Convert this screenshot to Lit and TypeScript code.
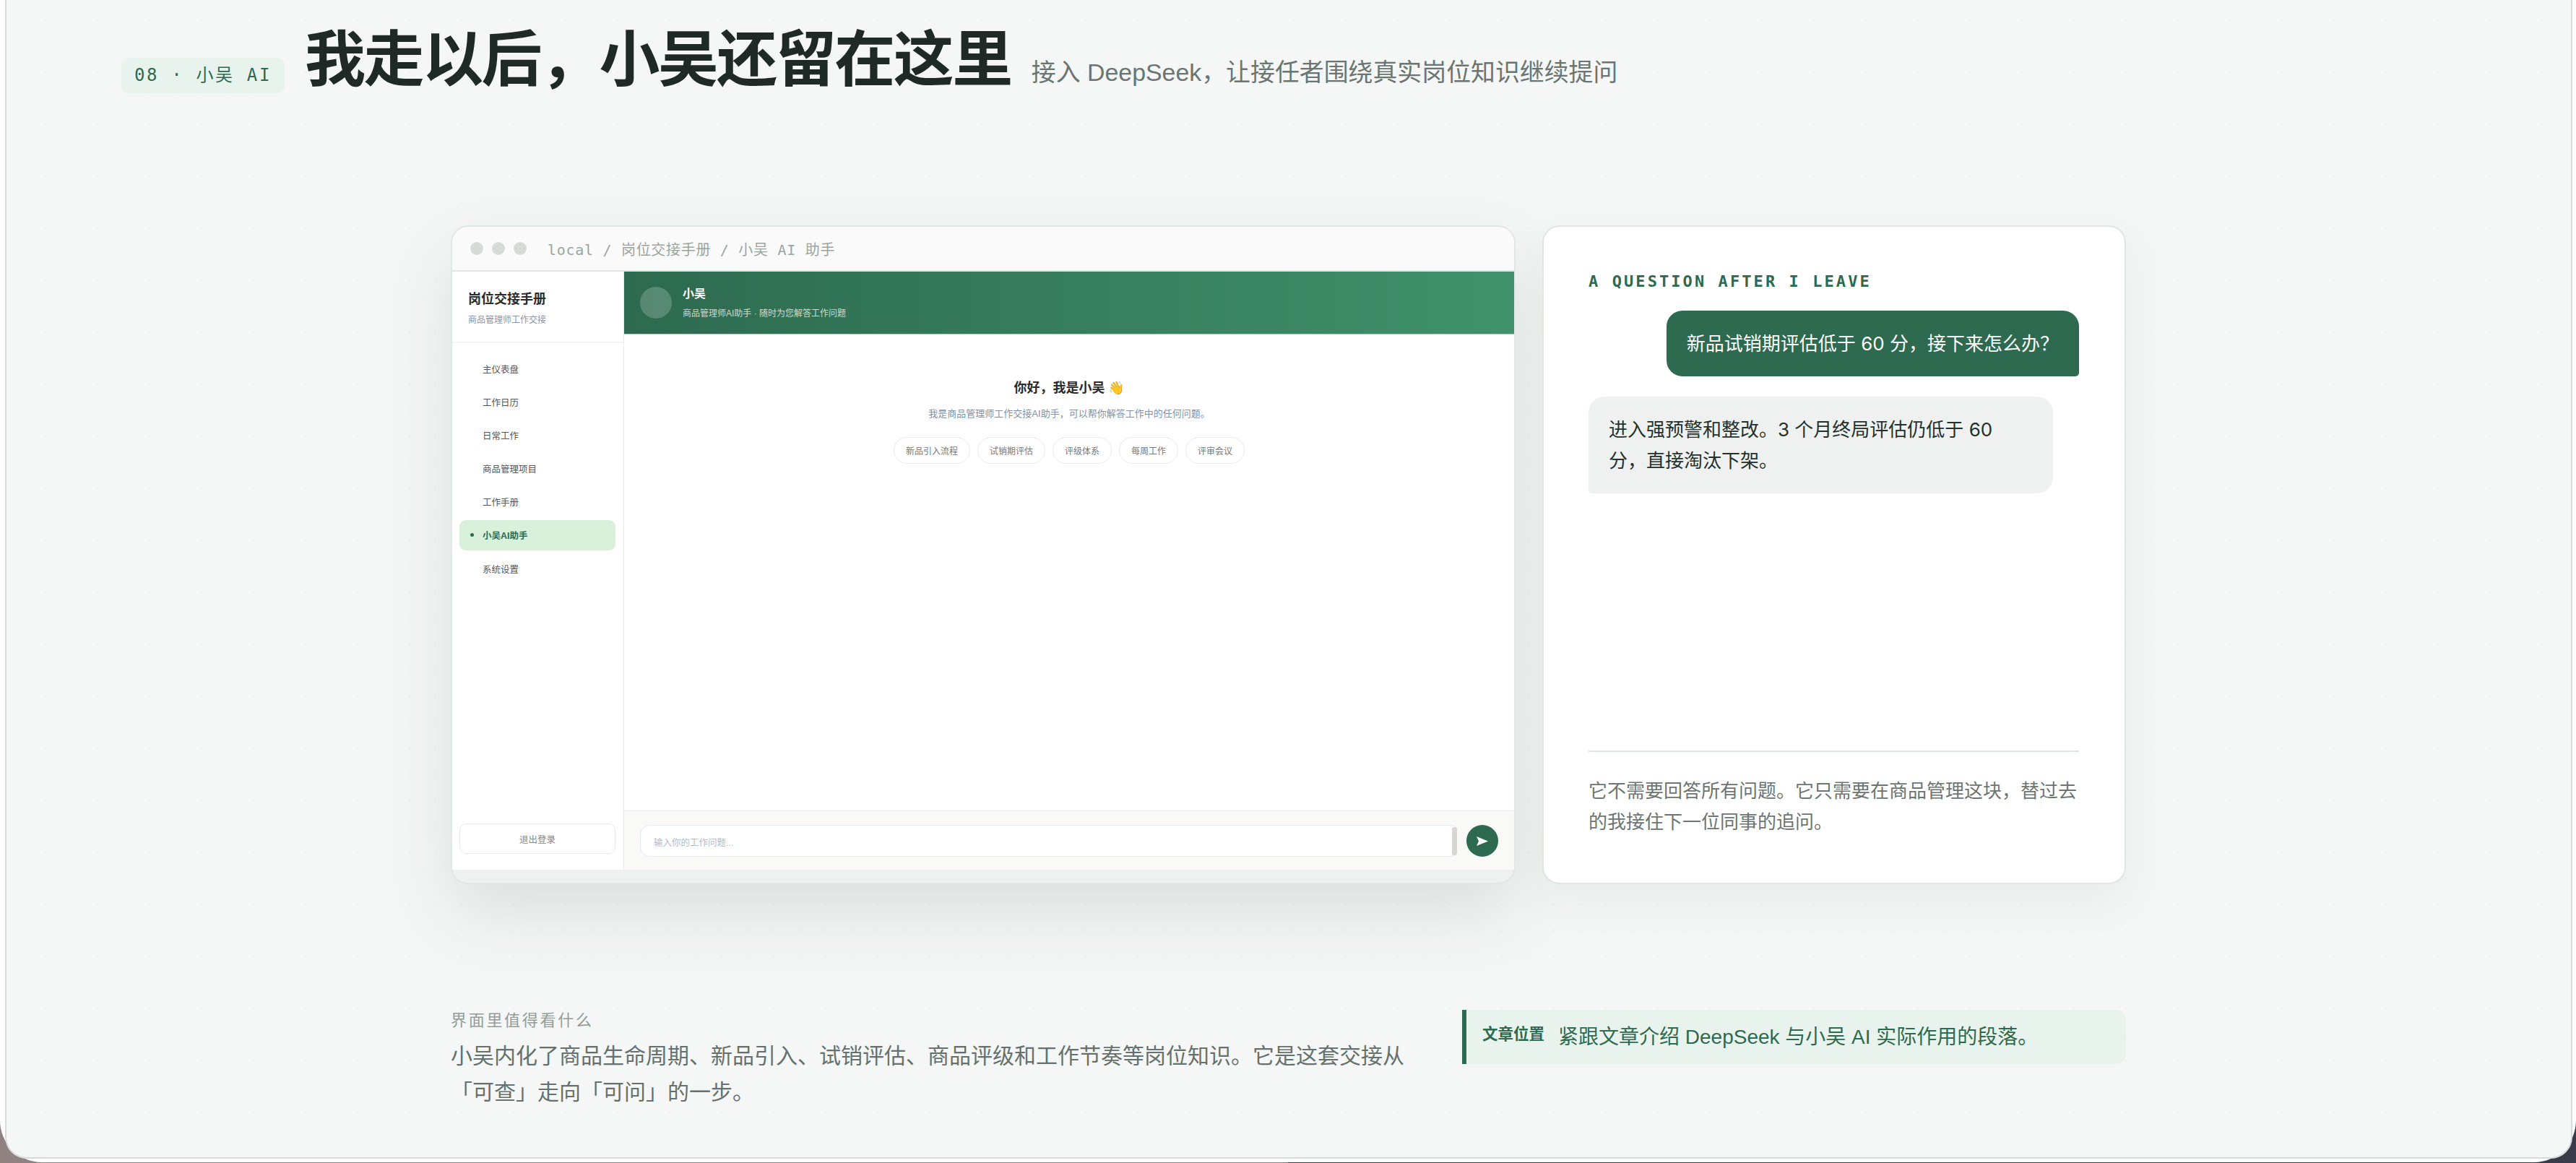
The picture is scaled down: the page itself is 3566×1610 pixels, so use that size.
import { LitElement, html, css } from "lit";
import { customElement } from "lit/decorators.js";

const NAV = ["主仪表盘", "工作日历", "日常工作", "商品管理项目", "工作手册", "小吴AI助手", "系统设置"];
const CHIPS = ["新品引入流程", "试销期评估", "评级体系", "每周工作", "评审会议"];

@customElement("app-root")
export class AppRoot extends LitElement {
  static styles = css`
    :host {
      display: block;
      width: 3566px;
      height: 1610px;
      overflow: hidden;
      background: linear-gradient(90deg, #8f8280 50%, #3a3a4a 50%);
      font-family: "Liberation Sans", "Noto Sans CJK SC", sans-serif;
      color: #1f2a26;
    }
    * { box-sizing: border-box; }
    .shell {
      height: 1609px;
      padding: 0 5px 5px 7px;
      background: #fff;
      border-radius: 0 0 58px 58px;
    }
    .frame {
      height: 100%;
      border: 2px solid #d9dbda;
      border-top: 0;
      border-radius: 0 0 30px 30px;
      background-color: #f4f7f6;
      background-image: radial-gradient(circle, rgba(45, 106, 79, 0.05) 1px, transparent 1.6px);
      background-size: 36px 36px;
      background-position: 0 10px;
    }
    .head {
      height: 312px;
      padding: 37px 0 0 159px;
      display: flex;
      align-items: baseline;
      gap: 28px;
    }
    .badge {
      font-family: "DejaVu Sans Mono", "Noto Sans CJK SC", monospace;
      font-size: 24px;
      line-height: 30px;
      letter-spacing: 2.64px;
      color: #2d6a4f;
      background: #e9f3ee;
      border-radius: 10px;
      padding: 9px 18px 10px 18px;
      white-space: pre;
    }
    h1 {
      margin: 0;
      font-size: 84px;
      line-height: 92px;
      font-weight: 700;
      letter-spacing: -2.52px;
      color: #1f2a26;
    }
    .lede { font-size: 33.9px; line-height: 44px; color: #6b7571; }

    .stage {
      width: 2319px;
      margin-left: 615px;
      display: flex;
      gap: 37px;
      height: 912px;
    }
    .window {
      width: 1474px;
      border: 2px solid #e1e7e5;
      border-radius: 24px;
      background: #edf1f0;
      box-shadow: 0 40px 96px rgba(20, 50, 40, 0.11);
      padding-bottom: 18px;
      display: flex;
      flex-direction: column;
      overflow: hidden;
    }
    .bar {
      height: 62px;
      flex: none;
      background: #fafafa;
      border-bottom: 2px solid #e3e8e6;
      display: flex;
      align-items: center;
      padding: 0 0 0 25px;
      gap: 12px;
    }
    .light { width: 18px; height: 18px; border-radius: 50%; background: #d5dcd8; }
    .crumb {
      margin-left: 17px;
      font-family: "DejaVu Sans Mono", "Noto Sans CJK SC", monospace;
      font-size: 20px;
      letter-spacing: 0.7px;
      color: #9aa5a0;
      white-space: pre;
    }
    .app { flex: 1; display: flex; background: #fff; min-height: 0; }
    .side {
      width: 238px;
      flex: none;
      border-right: 1px solid #e8ebf3;
      display: flex;
      flex-direction: column;
    }
    .side-head { padding: 25px 22px 21px; border-bottom: 2px solid #f2f4f6; }
    .side-title { font-size: 18px; line-height: 26px; font-weight: 700; color: #2b2b2b; }
    .side-sub { margin-top: 7px; font-size: 12px; line-height: 18px; color: #8a94a8; }
    .nav { padding: 14px 11px 0 10px; display: flex; flex-direction: column; gap: 4.2px; }
    .item {
      height: 42px;
      padding-left: 15px;
      display: flex;
      align-items: center;
      gap: 12px;
      border-radius: 9px;
      font-size: 12.5px;
      color: #555;
    }
    .dot { width: 5px; height: 5px; border-radius: 50%; }
    .item.on { background: #d9f0db; color: #2d6a4f; font-weight: 700; }
    .item.on .dot { background: #2d6a4f; }
    .logout {
      margin: auto 11px 22px 10px;
      height: 42px;
      border: 1.5px solid #e8eaf3;
      border-radius: 9px;
      display: flex;
      align-items: center;
      justify-content: center;
      font-size: 12.5px;
      color: #888;
    }
    .chat { flex: 1; min-width: 0; display: flex; flex-direction: column; }
    .chat-head {
      height: 87px;
      flex: none;
      padding: 0 22px;
      display: flex;
      align-items: center;
      gap: 15px;
      background: linear-gradient(90deg, #2d6a4f, #40916c);
      border-bottom: 1px solid #a9cbb9;
      color: #fff;
    }
    .avatar { width: 44px; height: 44px; border-radius: 50%; background: rgba(255, 255, 255, 0.2); }
    .who { font-size: 16px; line-height: 24px; font-weight: 700; }
    .who-sub { margin-top: 5px; font-size: 12px; line-height: 20px; color: rgba(255, 255, 255, 0.75); }
    .welcome {
      flex: 1;
      padding-top: 60px;
      display: flex;
      flex-direction: column;
      align-items: center;
    }
    .hello { font-size: 18px; line-height: 28px; font-weight: 700; color: #2b2b2b; }
    .hello-sub { margin-top: 12px; font-size: 13px; line-height: 20px; color: #8090a8; }
    .chips { margin-top: 22px; display: flex; gap: 10px; }
    .chip {
      height: 37px;
      padding: 0 16px;
      border: 1px solid #e8ebf3;
      border-radius: 19px;
      display: flex;
      align-items: center;
      font-size: 12px;
      color: #777;
    }
    .composer {
      height: 82px;
      flex: none;
      background: #f9f9f7;
      border-top: 1px solid #e8ebf3;
      padding: 19px 22px 0;
      display: flex;
      align-items: flex-start;
      gap: 13px;
    }
    .field {
      flex: 1;
      height: 44px;
      background: #fff;
      border: 1.5px solid #e3e8f4;
      border-radius: 14px 8px 8px 14px;
      padding-left: 18px;
      display: flex;
      align-items: center;
      justify-content: space-between;
      font-size: 12.5px;
      color: #b4bccb;
    }
    .field span { padding-top: 3px; }
    .thumb { width: 7px; height: 39px; border-radius: 3px; background: #d8d5d2; margin-right: -1px; }
    .send {
      width: 44px;
      height: 44px;
      border-radius: 50%;
      background: #2d6a4f;
      display: flex;
      align-items: center;
      justify-content: center;
    }
    .send svg { display: block; width: 16px; height: 13px; }

    .panel {
      width: 808px;
      background: #fff;
      border: 2px solid #dfe6e4;
      border-radius: 24px;
      box-shadow: 0 24px 64px rgba(20, 50, 40, 0.06);
      padding: 64px 63px 0 62px;
      display: flex;
      flex-direction: column;
    }
    .eyebrow {
      font-family: "DejaVu Sans Mono", monospace;
      font-size: 22px;
      line-height: 24px;
      font-weight: 700;
      letter-spacing: 3.08px;
      color: #2d6a4f;
    }
    .msgs { margin-top: 28px; flex: 1; display: flex; flex-direction: column; gap: 28px; }
    .msg {
      font-family: Inter, "Noto Sans CJK SC", sans-serif;
      font-size: 26px;
      line-height: 43px;
      padding: 24px 28px;
      border-radius: 22px;
    }
    .msg.me {
      align-self: flex-end;
      background: #2d6a4f;
      color: #fff;
      border-bottom-right-radius: 5px;
    }
    .msg.ai {
      width: 643px;
      background: #eef1f0;
      color: #24302b;
      border-bottom-left-radius: 5px;
    }
    .note {
      border-top: 2px solid #dfe5e3;
      padding: 33px 0 62px;
      font-size: 26px;
      line-height: 43px;
      color: #6b7571;
    }

    .foot {
      width: 2319px;
      margin: 174px 0 0 615px;
      display: grid;
      grid-template-columns: 1336px 919px;
      gap: 64px;
      align-items: start;
    }
    .foot-label { font-size: 22px; line-height: 30px; letter-spacing: 2.7px; color: #939c98; }
    .foot-text { margin-top: 9px; font-size: 30px; line-height: 50px; color: #66706c; }
    .where {
      height: 75px;
      background: #e9f3ee;
      border-left: 6px solid #2d6a4f;
      border-radius: 0 14px 14px 0;
      padding: 16px 0 0 22px;
      display: flex;
      align-items: flex-start;
      gap: 19px;
      color: #2d6a4f;
    }
    .where b { margin-top: 3px; font-size: 21.5px; line-height: 30px; font-weight: 700; }
    .where span { font-size: 28px; line-height: 43px; }
  `;

  render() {
    return html`
      <div class="shell">
        <div class="frame">
          <header class="head">
            <div class="badge">08 · 小吴 AI</div>
            <h1>我走以后，小吴还留在这里</h1>
            <div class="lede">接入 DeepSeek，让接任者围绕真实岗位知识继续提问</div>
          </header>

          <section class="stage">
            <div class="window">
              <div class="bar">
                <i class="light"></i><i class="light"></i><i class="light"></i>
                <div class="crumb">local / 岗位交接手册 / 小吴 AI 助手</div>
              </div>
              <div class="app">
                <aside class="side">
                  <div class="side-head">
                    <div class="side-title">岗位交接手册</div>
                    <div class="side-sub">商品管理师工作交接</div>
                  </div>
                  <nav class="nav">
                    ${NAV.map(
                      (n) => html`<div class="item ${n === "小吴AI助手" ? "on" : ""}"><i class="dot"></i>${n}</div>`
                    )}
                  </nav>
                  <div class="logout">退出登录</div>
                </aside>
                <div class="chat">
                  <div class="chat-head">
                    <div class="avatar"></div>
                    <div>
                      <div class="who">小吴</div>
                      <div class="who-sub">商品管理师AI助手 · 随时为您解答工作问题</div>
                    </div>
                  </div>
                  <div class="welcome">
                    <div class="hello">你好，我是小吴 👋</div>
                    <div class="hello-sub">我是商品管理师工作交接AI助手，可以帮你解答工作中的任何问题。</div>
                    <div class="chips">${CHIPS.map((c) => html`<div class="chip">${c}</div>`)}</div>
                  </div>
                  <div class="composer">
                    <div class="field"><span>输入你的工作问题...</span><i class="thumb"></i></div>
                    <div class="send">
                      <svg viewBox="0 0 16 13"><path d="M0 0 16 6.5 0 13 3 6.5Z" fill="#fff" /></svg>
                    </div>
                  </div>
                </div>
              </div>
            </div>

            <aside class="panel">
              <div class="eyebrow">A QUESTION AFTER I LEAVE</div>
              <div class="msgs">
                <div class="msg me">新品试销期评估低于 60 分，接下来怎么办？</div>
                <div class="msg ai">进入强预警和整改。3 个月终局评估仍低于 60 分，直接淘汰下架。</div>
              </div>
              <div class="note">它不需要回答所有问题。它只需要在商品管理这块，替过去的我接住下一位同事的追问。</div>
            </aside>
          </section>

          <section class="foot">
            <div>
              <div class="foot-label">界面里值得看什么</div>
              <div class="foot-text">小吴内化了商品生命周期、新品引入、试销评估、商品评级和工作节奏等岗位知识。它是这套交接从「可查」走向「可问」的一步。</div>
            </div>
            <div class="where">
              <b>文章位置</b>
              <span>紧跟文章介绍 DeepSeek 与小吴 AI 实际作用的段落。</span>
            </div>
          </section>
        </div>
      </div>
    `;
  }
}
